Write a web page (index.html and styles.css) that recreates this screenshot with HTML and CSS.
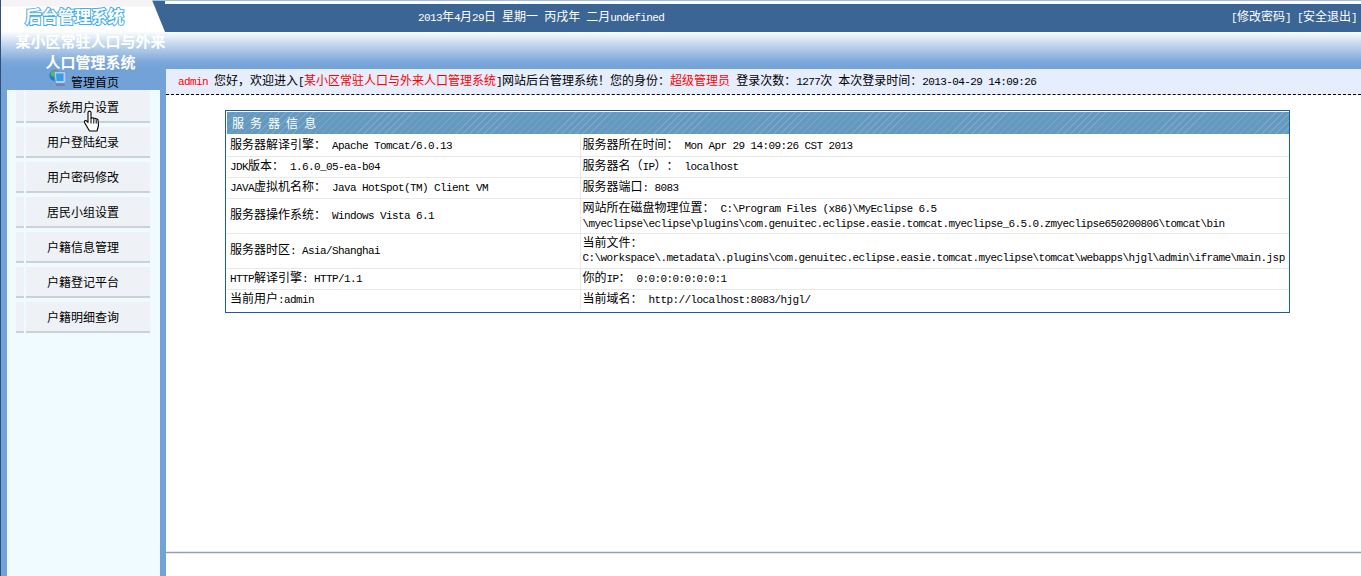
FILE: index.html
```html
<!DOCTYPE html>
<html lang="zh-CN">
<head>
<meta charset="utf-8">
<title>后台管理系统</title>
<link rel="stylesheet" href="styles.css">
</head>
<body>
<div class="shell">
  <header class="topbar">
    <div class="logo"><span class="logo-text">后台管理系统</span></div>
    <div class="band">
      <div class="date"><span class="en">2013</span>年<span class="en">4</span>月<span class="en">29</span>日<span class="en"> </span>星期一<span class="en"> </span>丙戌年<span class="en"> </span>二月<span class="en">undefined</span></div>
      <div class="links"><span class="en">[</span>修改密码<span class="en">] [</span>安全退出<span class="en">]</span></div>
    </div>
  </header>
  <div class="body">
    <aside class="side">
      <div class="side-head">
        <h1 class="sys-title">某小区常驻人口与外来人口管理系统</h1>
        <div class="home">
          <svg class="home-icon" width="18" height="18" viewBox="0 0 18 18">
            <circle cx="6" cy="6.500" r="5.500" fill="#1c7fc4"/>
            <path d="M1.500 4c2-3 5-3 6.500-2 0 2-2.500 2-3 4.500S2 8 1.500 4z" fill="#4fbf5a"/>
            <path d="M5 2.500h10.500l1.500 1.500v8.500l-2 2H6.500z" fill="#9fd2f5" stroke="#8a8fb0" stroke-width="1"/>
            <path d="M7 4.500h7.500v7.500H7.500z" fill="#3a9be6"/>
            <path d="M7 15h9v2H7z" fill="#7c7fa8"/>
          </svg>
          <span>管理首页</span>
        </div>
      </div>
      <nav class="menu">
        <div class="item"><span class="item-tab"></span><span class="item-label">系统用户设置</span></div>
        <div class="item"><span class="item-tab"></span><span class="item-label">用户登陆纪录</span></div>
        <div class="item"><span class="item-tab"></span><span class="item-label">用户密码修改</span></div>
        <div class="item"><span class="item-tab"></span><span class="item-label">居民小组设置</span></div>
        <div class="item"><span class="item-tab"></span><span class="item-label">户籍信息管理</span></div>
        <div class="item"><span class="item-tab"></span><span class="item-label">户籍登记平台</span></div>
        <div class="item"><span class="item-tab"></span><span class="item-label">户籍明细查询</span></div>
      </nav>
      <svg class="cursor" width="18" height="24" viewBox="0 0 18 24">
        <path d="M5.500 1.500c1-.8 2.200-.4 2.500.8v6.200l1-.6c.8-.3 1.500 0 1.800.6.800-.5 1.700-.3 2.100.5.800-.4 1.800 0 2.100.8l.5 5.700-1.500 5.500H6.500L1.500 12.500c-.6-1.500 1-2.500 2.200-1.500l1.300 1.500V2.500z" fill="#fff" stroke="#000" stroke-width="1.100" stroke-linejoin="round"/>
        <path d="M8 8.500v5M10.800 9v4.500M13.200 9.500v4" stroke="#000" stroke-width="1" fill="none"/>
      </svg>
    </aside>
    <main class="content">
      <div class="status">
        <span class="en red">admin </span>您好，欢迎进入<span class="en">[</span><span class="red">某小区常驻人口与外来人口管理系统</span><span class="en">]</span>网站后台管理系统！您的身份：<span class="red">超级管理员</span><span class="en"> </span>登录次数：<span class="en">1277</span>次<span class="en"> </span>本次登录时间：<span class="en">2013-04-29 14:09:26</span>
      </div>
      <div class="work">
        <div class="panel">
          <table class="info">
            <colgroup><col class="col-a"><col class="col-b"></colgroup>
            <thead>
              <tr><th colspan="2" class="info-title">服<span class="en"> </span>务<span class="en"> </span>器<span class="en"> </span>信<span class="en"> </span>息</th></tr>
            </thead>
            <tbody>
              <tr>
                <td>服务器解译引擎：<span class="en"> Apache Tomcat/6.0.13</span></td>
                <td>服务器所在时间：<span class="en"> Mon Apr 29 14:09:26 CST 2013</span></td>
              </tr>
              <tr>
                <td><span class="en">JDK</span>版本：<span class="en"> 1.6.0_05-ea-b04</span></td>
                <td>服务器名（<span class="en">IP</span>）：<span class="en"> localhost</span></td>
              </tr>
              <tr>
                <td><span class="en">JAVA</span>虚拟机名称：<span class="en"> Java HotSpot(TM) Client VM</span></td>
                <td>服务器端口<span class="en">: 8083</span></td>
              </tr>
              <tr class="tall">
                <td>服务器操作系统：<span class="en"> Windows Vista 6.1</span></td>
                <td>网站所在磁盘物理位置：<span class="en"> C:\Program Files (x86)\MyEclipse 6.5<br>\myeclipse\eclipse\plugins\com.genuitec.eclipse.easie.tomcat.myeclipse_6.5.0.zmyeclipse650200806\tomcat\bin</span></td>
              </tr>
              <tr class="tall">
                <td>服务器时区<span class="en">: Asia/Shanghai</span></td>
                <td>当前文件：<br><span class="en">C:\workspace\.metadata\.plugins\com.genuitec.eclipse.easie.tomcat.myeclipse\tomcat\webapps\hjgl\admin\iframe\main.jsp</span></td>
              </tr>
              <tr>
                <td><span class="en">HTTP</span>解译引擎<span class="en">: HTTP/1.1</span></td>
                <td>你的<span class="en">IP</span>：<span class="en"> 0:0:0:0:0:0:0:1</span></td>
              </tr>
              <tr>
                <td>当前用户<span class="en">:admin</span></td>
                <td>当前域名：<span class="en"> http://localhost:8083/hjgl/</span></td>
              </tr>
            </tbody>
          </table>
        </div>
      </div>
      <div class="foot"></div>
    </main>
  </div>
</div>
</body>
</html>
```
FILE: styles.css
```css
* { box-sizing: border-box; }
html, body { margin: 0; height: 100%; }
body {
  overflow: hidden;
  background: #fff;
  color: #000;
  font: 12px/14px "Noto Sans CJK SC", "Liberation Sans", sans-serif;
  text-spacing-trim: space-all;
}
.en {
  font-family: "Liberation Mono", "DejaVu Sans Mono", monospace;
  font-size: 11px;
  letter-spacing: -0.6px;
  line-height: 1;
  white-space: pre;
}
.red { color: #f00; }
.shell { display: flex; flex-direction: column; height: 576px; }

.topbar {
  display: flex;
  flex: none;
  height: 32px;
  border-top: 1px solid #9dc0dc;
  background: #3a6595;
}
.logo {
  flex: none;
  width: 165px;
  margin-top: -1px;
  height: 32px;
  padding: 8px 0 0 24px;
  background: linear-gradient(#f5f3f5 0, #f5f3f5 6px, #fff 7px);
  border-left: 1px solid #2f4f7a;
  clip-path: polygon(0 0, 152px 0, 165px 32px, 0 32px);
}
.logo-text {
  display: block;
  width: 100px;
  color: #fff;
  font-size: 16.500px;
  line-height: 17px;
  font-weight: 700;
  white-space: nowrap;
  -webkit-text-stroke: 2px #45ade8;
  paint-order: stroke fill;
}
.band {
  flex: 1;
  display: flex;
  justify-content: space-between;
  align-items: center;
  padding: 0 4px 1px 253px;
  color: #fff;
  background: linear-gradient(#fff 0, #fff 3px, #3a6595 3px);
}

.body {
  flex: 1;
  display: flex;
  min-height: 0;
  border-left: 1px solid #2f4f7a;
  background: #72a2d8 linear-gradient(#fbfcfe 0, #c5d8ee 12px, #7ba7da 30px, #72a2d8 37px) no-repeat;
  background-size: 100% 37px;
}
.side {
  flex: none;
  width: 165px;
  padding: 0 6px;
  display: flex;
  flex-direction: column;
  position: relative;
}
.side-head {
  flex: none;
  height: 58px;
  margin: 0 -6px;
  color: #fff;
  text-align: center;
}
.sys-title {
  margin: -2px 0 0;
  padding: 0 0 0 14px;
  height: 39px;
  font-size: 15px;
  line-height: 21px;
  font-weight: 700;
  color: #fff;
}
.home {
  display: flex;
  align-items: center;
  height: 21px;
  padding: 4px 0 0 48px;
  color: #000;
  gap: 4px;
}
.home-icon { margin-top: -8px; }

.menu {
  flex: 1;
  background: #f0fbff;
  padding: 0 9px;
}
.item {
  display: flex;
  height: 35px;
  gap: 2px;
  padding-top: 4px;
  text-align: center;
}
.item:first-child { height: 33px; padding-top: 0; }
.item-tab {
  flex: none;
  width: 8px;
  background: #eef1f6;
  border-bottom: 2px solid #cdd0d4;
}
.item-label {
  flex: none;
  width: 124px;
  padding-right: 10px;
  background: #eef1f6;
  border-bottom: 2px solid #cdd0d4;
  line-height: 29px;
}
.item:first-child .item-label { line-height: 33px; }
.cursor {
  position: absolute;
  left: 82px;
  top: 78px;
}

.content {
  flex: 1;
  min-width: 0;
  margin-top: 37px;
  background: #fff;
  display: flex;
  flex-direction: column;
}
.status {
  flex: none;
  height: 26px;
  padding-left: 12px;
  line-height: 22px;
  background: #e6edfc;
  border-bottom: 1px dashed #000;
  white-space: nowrap;
}
.work {
  flex: 1;
  padding: 15px 0 0 59px;
  border-bottom: 1px solid #9b9bae;
  box-shadow: 0 1px 0 #e3e8f4, inset 0 -1px 0 #e3e8f4;
}
.foot { flex: none; height: 23px; }
.panel {
  width: 1065px;
  height: 203px;
  border: 1px solid #1a5ca8;
  padding: 1px 0 0 1px;
}
.info {
  width: 1062px;
  table-layout: fixed;
  border-collapse: collapse;
}
.col-a { width: 353px; }
.info-title {
  height: 22px;
  padding: 0 0 0 5px;
  text-align: left;
  font-weight: 400;
  color: #fff;
  background: #6599c0 repeating-linear-gradient(-45deg, #6599c0 0, #6599c0 4px, #79a7c9 4px, #79a7c9 5px);
}
.info td {
  height: 21px;
  padding: 1px 0 3px 3px;
  white-space: nowrap;
  border-bottom: 1px solid #e9e9e9;
  border-right: 1px solid #e9e9e9;
  vertical-align: middle;
}
.info .tall td { height: 35px; }
.info td:last-child { border-right: 0; padding-left: 2px; }
.info tbody tr:first-child td { height: 22px; padding-top: 2px; }
.info tr:last-child td { border-bottom: 0; }
```
